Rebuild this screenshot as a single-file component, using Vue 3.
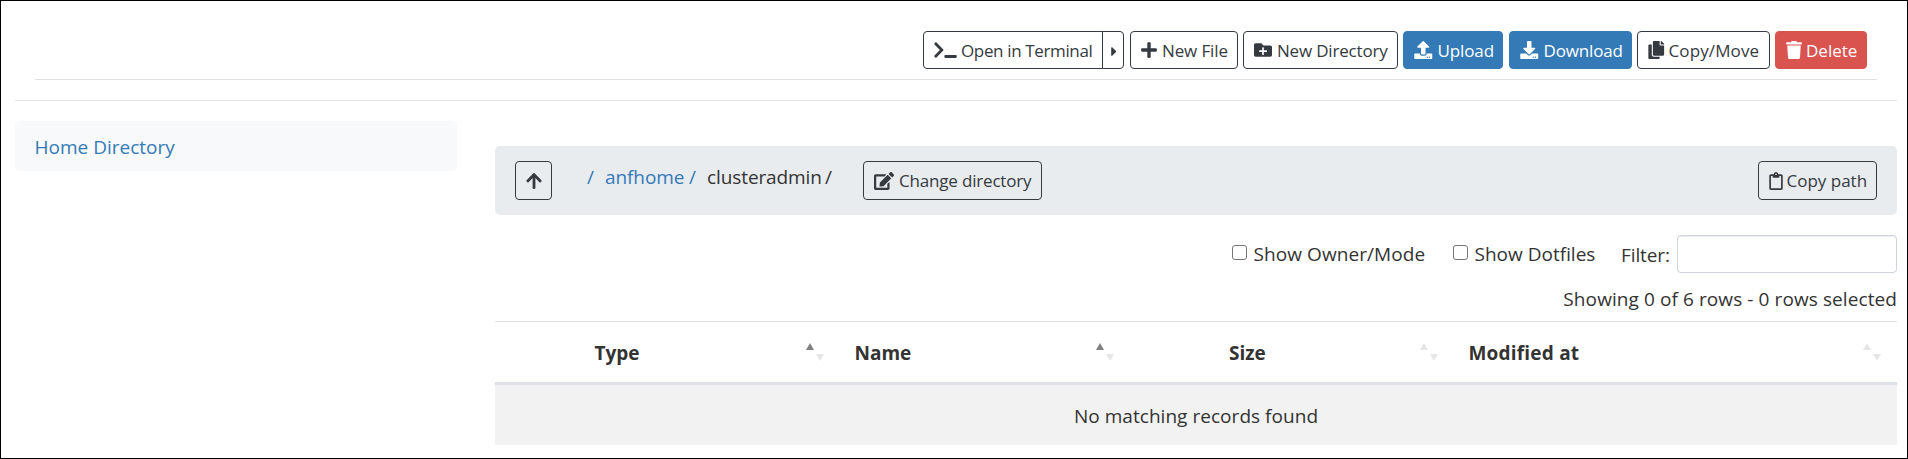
<script setup>
import { ref } from 'vue'

const icons = {
  terminal: [640, 'M257.981 272.971L63.638 467.314c-9.373 9.373-24.569 9.373-33.941 0L7.029 444.647c-9.357-9.357-9.375-24.522-.04-33.901L161.011 256 6.99 101.255c-9.335-9.379-9.317-24.544.04-33.901l22.667-22.667c9.373-9.373 24.569-9.373 33.941 0L257.981 239.03c9.373 9.372 9.373 24.568 0 33.941zM640 456v-32c0-13.255-10.745-24-24-24H312c-13.255 0-24 10.745-24 24v32c0 13.255 10.745 24 24 24h304c13.255 0 24-10.745 24-24z'],
  plus: [448, 'M416 208H272V64c0-17.67-14.33-32-32-32h-32c-17.67 0-32 14.33-32 32v144H32c-17.67 0-32 14.33-32 32v32c0 17.67 14.33 32 32 32h144v144c0 17.67 14.33 32 32 32h32c17.67 0 32-14.33 32-32V304h144c17.67 0 32-14.33 32-32v-32c0-17.67-14.33-32-32-32z'],
  folder: [512, 'M464 128H272l-64-64H48C21.49 64 0 85.49 0 112v288c0 26.51 21.49 48 48 48h416c26.51 0 48-21.49 48-48V176c0-26.51-21.49-48-48-48zm-96 168c0 8.84-7.16 16-16 16h-72v72c0 8.84-7.16 16-16 16h-16c-8.84 0-16-7.16-16-16v-72h-72c-8.84 0-16-7.16-16-16v-16c0-8.84 7.16-16 16-16h72v-72c0-8.84 7.16-16 16-16h16c8.84 0 16 7.16 16 16v72h72c8.84 0 16 7.16 16 16v16z'],
  upload: [512, 'M296 384h-80c-13.3 0-24-10.7-24-24V192h-87.7c-17.8 0-26.7-21.5-14.1-34.1L242.3 5.7c7.5-7.5 19.8-7.5 27.3 0l152.2 152.2c12.6 12.6 3.7 34.1-14.1 34.1H320v168c0 13.3-10.7 24-24 24zm216-8v112c0 13.3-10.7 24-24 24H24c-13.3 0-24-10.7-24-24V376c0-13.3 10.7-24 24-24h136v8c0 30.9 25.1 56 56 56h80c30.9 0 56-25.1 56-56v-8h136c13.3 0 24 10.7 24 24zm-124 88c0-11-9-20-20-20s-20 9-20 20 9 20 20 20 20-9 20-20zm64 0c0-11-9-20-20-20s-20 9-20 20 9 20 20 20 20-9 20-20z'],
  download: [512, 'M216 0h80c13.3 0 24 10.7 24 24v168h87.7c17.8 0 26.7 21.5 14.1 34.1L269.7 378.3c-7.5 7.5-19.8 7.5-27.3 0L90.1 226.1c-12.6-12.6-3.7-34.1 14.1-34.1H192V24c0-13.3 10.7-24 24-24zm296 376v112c0 13.3-10.7 24-24 24H24c-13.3 0-24-10.7-24-24V376c0-13.3 10.7-24 24-24h146.7l49 49c20.1 20.1 52.5 20.1 72.6 0l49-49H488c13.3 0 24 10.7 24 24zm-124 88c0-11-9-20-20-20s-20 9-20 20 9 20 20 20 20-9 20-20zm64 0c0-11-9-20-20-20s-20 9-20 20 9 20 20 20 20-9 20-20z'],
  copy: [448, 'M320 448v40c0 13.255-10.745 24-24 24H24c-13.255 0-24-10.745-24-24V120c0-13.255 10.745-24 24-24h72v296c0 30.879 25.121 56 56 56h168zm0-344V0H152c-13.255 0-24 10.745-24 24v368c0 13.255 10.745 24 24 24h272c13.255 0 24-10.745 24-24V128H344c-13.2 0-24-10.8-24-24zm120.971-31.029L375.029 7.029A24 24 0 0 0 358.059 0H352v96h96v-6.059a24 24 0 0 0-7.029-16.97z'],
  trash: [448, 'M432 32H312l-9.4-18.7A24 24 0 0 0 281.1 0H166.8a23.72 23.72 0 0 0-21.4 13.3L136 32H16A16 16 0 0 0 0 48v32a16 16 0 0 0 16 16h416a16 16 0 0 0 16-16V48a16 16 0 0 0-16-16zM32 128l21.2 339a48 48 0 0 0 47.9 45h245.8a48 48 0 0 0 47.9-45L416 128H32z'],
  caret: [192, 'M0 384.662V127.338c0-17.818 21.543-26.741 33.941-14.142l128.662 128.662c7.81 7.81 7.81 20.474 0 28.284L33.941 398.804C21.543 411.202 0 402.48 0 384.662z'],
  up: [448, 'M34.9 289.5l-22.2-22.2c-9.4-9.4-9.4-24.6 0-33.9L207 39c9.4-9.4 24.6-9.4 33.9 0l194.3 194.3c9.4 9.4 9.4 24.6 0 33.9L413 289.4c-9.5 9.5-25 9.3-34.3-.4L264 168.6V456c0 13.3-10.7 24-24 24h-32c-13.3 0-24-10.7-24-24V168.6L69.2 289.1c-9.3 9.8-24.8 10-34.3.4z'],
  edit: [576, 'M402.6 83.2l90.2 90.2c3.8 3.8 3.8 10 0 13.8L274.4 405.6l-92.8 10.3c-12.4 1.4-22.9-9.1-21.5-21.5l10.3-92.8L388.8 83.2c3.8-3.8 10-3.8 13.8 0zm162-22.9l-48.8-48.8c-15.2-15.2-39.9-15.2-55.2 0l-35.4 35.4c-3.8 3.8-3.8 10 0 13.8l90.2 90.2c3.8 3.8 10 3.8 13.8 0l35.4-35.4c15.2-15.3 15.2-40 0-55.2zM384 346.2V448H64V128h229.8c3.2 0 6.2-1.3 8.5-3.5l40-40c7.6-7.6 2.2-20.5-8.5-20.5H48C21.5 64 0 85.5 0 112v352c0 26.5 21.5 48 48 48h352c26.5 0 48-21.5 48-48V306.2c0-10.7-12.9-16-20.5-8.5l-40 40c-2.2 2.3-3.5 5.3-3.5 8.5z'],
  clipboard: [384, 'M336 64h-80c0-35.3-28.7-64-64-64s-64 28.7-64 64H48C21.5 64 0 85.5 0 112v352c0 26.5 21.5 48 48 48h288c26.5 0 48-21.5 48-48V112c0-26.5-21.5-48-48-48zM192 40c13.3 0 24 10.7 24 24s-10.7 24-24 24-24-10.7-24-24 10.7-24 24-24zm144 418c0 3.3-2.7 6-6 6H54c-3.3 0-6-2.7-6-6V118c0-3.3 2.7-6 6-6h42v36c0 6.6 5.4 12 12 12h168c6.6 0 12-5.4 12-12v-36h42c3.3 0 6 2.7 6 6v340z'],
}
const box = (n) => `0 0 ${icons[n][0]} 512`

const actions = [
  { icon: 'plus', text: 'New File', cls: 'new-file' },
  { icon: 'folder', text: 'New Directory', cls: 'new-dir' },
  { icon: 'upload', text: 'Upload', cls: 'upload primary' },
  { icon: 'download', text: 'Download', cls: 'download primary' },
  { icon: 'copy', text: 'Copy/Move', cls: 'copy-move' },
  { icon: 'trash', text: 'Delete', cls: 'delete danger' },
]
const columns = [
  { text: '' },
  { text: 'Type', sort: 'asc' },
  { text: 'Name', sort: 'asc' },
  { text: '' },
  { text: 'Size', sort: 'none', cls: 'size' },
  { text: 'Modified at', sort: 'none', cls: 'modified' },
]
const owner = ref(false)
const dotfiles = ref(false)
const filter = ref('')
</script>

<template>
  <div class="page">
    <div class="toolbar">
      <div class="group">
        <button class="btn terminal">
          <svg class="icon" :viewBox="box('terminal')"><path :d="icons.terminal[1]" /></svg><span>Open in Terminal</span>
        </button>
        <button class="btn toggle">
          <svg class="icon" :viewBox="box('caret')"><path :d="icons.caret[1]" /></svg>
        </button>
      </div>
      <button v-for="a in actions" :key="a.text" class="btn" :class="a.cls">
        <svg class="icon" :viewBox="box(a.icon)"><path :d="icons[a.icon][1]" /></svg><span>{{ a.text }}</span>
      </button>
    </div>
    <div class="rule"></div>

    <div class="columns">
      <nav class="side"><a>Home Directory</a></nav>
      <main class="main">
        <div class="crumbs">
          <button class="btn up">
            <svg class="icon" :viewBox="box('up')"><path :d="icons.up[1]" /></svg>
          </button>
          <div class="path">
            <a class="root">/</a><a class="anf">anfhome</a><a class="sep">/</a><span class="cur">clusteradmin</span><span>/</span>
          </div>
          <button class="btn change">
            <svg class="icon" :viewBox="box('edit')"><path :d="icons.edit[1]" /></svg><span>Change directory</span>
          </button>
          <button class="btn copy-path">
            <svg class="icon" :viewBox="box('clipboard')"><path :d="icons.clipboard[1]" /></svg><span>Copy path</span>
          </button>
        </div>

        <div class="filters">
          <label class="check owner"><input v-model="owner" type="checkbox" /><span>Show Owner/Mode</span></label>
          <label class="check dots"><input v-model="dotfiles" type="checkbox" /><span>Show Dotfiles</span></label>
          <label class="filter"><span>Filter:</span><input v-model="filter" type="text" /></label>
        </div>
        <div class="status">Showing 0 of 6 rows - 0 rows selected</div>

        <div class="thead">
          <div v-for="(c, i) in columns" :key="i" class="th" :class="c.cls">
            <span>{{ c.text }}</span>
            <svg v-if="c.sort" class="sort" viewBox="0 0 18 18">
              <path :class="{ on: c.sort === 'asc' }" d="M4 0L8 7H0z" />
              <path d="M10 11H18L14 18z" />
            </svg>
          </div>
        </div>
        <div class="empty">No matching records found</div>
      </main>
    </div>
  </div>
</template>

<style>
body { margin: 0; }
</style>

<style scoped>
.page {
  box-sizing: border-box;
  width: 1908px;
  height: 459px;
  padding: 30px 10px 0 14px;
  border: 1px solid #000;
  background: #fff;
  color: #333;
  font: 19px/30px "Open Sans", "Noto Sans", sans-serif;
  overflow: hidden;
}
.toolbar {
  display: flex;
  justify-content: flex-end;
  gap: 5px;
  height: 48px;
  margin: 0 20px;
  padding-right: 10px;
  border-bottom: 1px solid #dee0e2;
}
.rule { height: 1px; margin-top: 20px; background: #e2e3e4; }
.group { display: flex; }
.btn {
  box-sizing: border-box;
  display: flex;
  align-items: center;
  flex: none;
  height: 38px;
  padding: 0 0 0 10px;
  border: 1px solid #343a40;
  border-radius: 4px;
  background: transparent;
  color: #343a40;
  font: 17px/26px "Open Sans", "Noto Sans", sans-serif;
  white-space: nowrap;
}
.btn span { position: relative; top: .5px; }
.icon { flex: none; height: 18px; margin-right: 5px; fill: currentColor; }
.terminal { width: 180px; border-radius: 4px 0 0 4px; letter-spacing: -.36px; }
.terminal .icon { width: 23px; margin-right: 4px; }
.toggle { width: 22px; margin-left: -1px; padding: 0 0 0 8px; border-radius: 0 4px 4px 0; }
.toggle .icon { width: 6px; height: 15px; margin: 2px 0 0; }
.new-file { width: 108px; margin-left: 1px; letter-spacing: -.12px; }
.new-file .icon { width: 16px; }
.new-dir { width: 155px; letter-spacing: -.18px; }
.new-dir .icon { width: 18px; }
.upload { width: 100px; letter-spacing: -.12px; }
.upload .icon, .download .icon { width: 18.5px; }
.download { width: 123px; margin-left: 1px; letter-spacing: -.16px; }
.copy-move { width: 133px; letter-spacing: .12px; }
.copy-move .icon { width: 16.5px; margin-right: 4px; }
.delete { width: 92px; }
.delete .icon { width: 16px; margin-right: 4px; }
.primary { border-color: #337ab7; background: #337ab7; color: #fff; }
.danger { border-color: #d9534f; background: #d9534f; color: #fff; }

.columns { display: flex; gap: 38px; }
.side {
  box-sizing: border-box;
  width: 442px;
  height: 50px;
  margin-top: 20px;
  padding: 11px 0 0 19.5px;
  border-radius: 5px;
  background: #f8f9fa;
}
.main { width: 1402px; padding-top: 45px; }
a { color: #337ab7; }
.crumbs {
  box-sizing: border-box;
  display: flex;
  height: 69px;
  padding: 15px 20px 0;
  border-radius: 5px;
  background: #e9ecef;
}
.crumbs .btn { height: 39px; }
.up { width: 37px; }
.up .icon { width: 16px; margin: 0; }
.path { display: flex; width: 276px; margin: 1px 0 0 35px; }
.root { width: 17px; }
.anf { width: 85px; letter-spacing: -.08px; }
.sep { width: 17px; }
.cur { width: 119px; letter-spacing: -.1px; }
.cur, .anf { padding-left: 1px; box-sizing: border-box; }
.change { width: 179px; letter-spacing: -.18px; }
.change .icon { width: 20px; }
.copy-path { width: 119px; margin-left: auto; padding-left: 9.5px; }
.copy-path .icon { width: 14px; margin-right: 4px; }

.filters { display: flex; justify-content: flex-end; height: 38px; margin-top: 20px; }
.check { display: flex; padding-top: 4px; }
.check input {
  appearance: none;
  box-sizing: border-box;
  width: 15px;
  height: 15px;
  margin: 6px 6.5px 0 0;
  border: 1px solid #767676;
  border-radius: 3px;
  background: #fff;
}
.owner { width: 221px; letter-spacing: .08px; }
.dots { width: 168px; }
.filter { display: flex; }
.filter span { width: 56px; padding-top: 5px; letter-spacing: -.1px; }
.filter input {
  box-sizing: border-box;
  width: 220px;
  height: 38px;
  padding: 0 10px;
  border: 1px solid #ced4da;
  border-radius: 4px;
  box-shadow: inset 0 1px 1px rgba(0, 0, 0, .075);
  font: inherit;
}
.status { height: 36px; margin-top: 12px; line-height: 29px; text-align: right; letter-spacing: .09px; }
.thead {
  box-sizing: border-box;
  display: grid;
  grid-template-columns: 85px 260px 290px 84px 240px 443px;
  height: 64px;
  border-top: 1px solid #dee2e6;
  border-bottom: 3px solid #dee2e6;
  font-weight: 700;
}
.th {
  display: flex;
  align-items: flex-start;
  justify-content: space-between;
  padding: 16px 16.5px 0 14.5px;
}
.size { padding-left: 15px; }
.modified { letter-spacing: .2px; }
.sort { width: 18px; height: 18px; margin-top: 5px; fill: #e6e6e6; }
.sort .on { fill: #808080; }
.empty { height: 60px; background: #f2f2f2; line-height: 62px; text-align: center; letter-spacing: .04px; }
</style>
